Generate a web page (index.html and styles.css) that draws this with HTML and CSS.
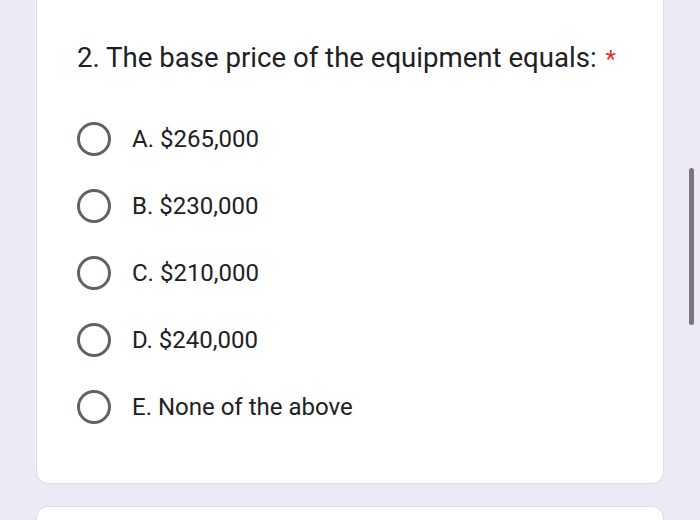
FILE: index.html
```html
<!DOCTYPE html>
<html>
<head>
<meta charset="utf-8">
<link rel="stylesheet" href="styles.css">
</head>
<body>
<div class="page">
  <div class="card">
    <div class="title">2. The base price of the equipment equals: <span class="req">*</span></div>
    <div class="options">
      <div class="opt"><span class="radio"></span><span class="label">A. $265,000</span></div>
      <div class="opt"><span class="radio"></span><span class="label">B. $230,000</span></div>
      <div class="opt"><span class="radio"></span><span class="label">C. $210,000</span></div>
      <div class="opt"><span class="radio"></span><span class="label">D. $240,000</span></div>
      <div class="opt"><span class="radio"></span><span class="label">E. None of the above</span></div>
    </div>
  </div>
  <div class="card next"></div>
</div>
<div class="scrollbar"></div>
</body>
</html>
```
FILE: styles.css
```css
html, body {
  margin: 0;
  padding: 0;
  width: 700px;
  height: 520px;
  overflow: hidden;
  background: #eeeaf5;
  font-family: Roboto, "Liberation Sans", sans-serif;
  color: #202124;
}
.page {
  display: flex;
  flex-direction: column;
  gap: 22px;
  padding-left: 36px;
  margin-top: -12px;
}
.card {
  width: 628px;
  background: #fff;
  border: 1px solid #dcdae2;
  border-radius: 12px;
  box-sizing: border-box;
}
.card:first-child {
  height: 496px;
  padding: 53px 0 0 40px;
}
.next {
  height: 60px;
}
.title {
  font-size: 27.6px;
  line-height: 32px;
  color: #202124;
  white-space: nowrap;
}
.req {
  color: #d93025;
  font-size: 24px;
  margin-left: 2px;
}
.options {
  display: flex;
  flex-direction: column;
  gap: 33px;
  margin-top: 47px;
}
.opt {
  display: flex;
  align-items: center;
  gap: 21px;
  height: 34px;
}
.radio {
  width: 34px;
  height: 34px;
  box-sizing: border-box;
  border: 3px solid #5f6368;
  border-radius: 50%;
  flex: none;
}
.label {
  font-size: 24px;
  color: #202124;
}
.scrollbar {
  position: absolute;
  left: 689px;
  top: 168px;
  width: 5px;
  height: 157px;
  border-radius: 3px;
  background: #7a7580;
}
```
